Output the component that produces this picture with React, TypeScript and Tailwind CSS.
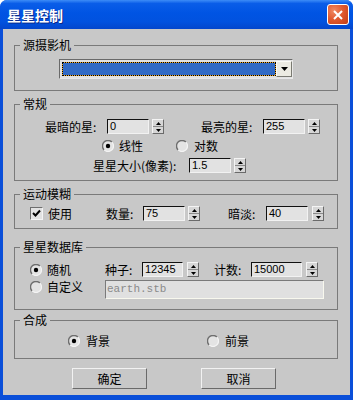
import clsx from 'clsx'
import type { ReactNode } from 'react'

function GroupBox({
	title,
	className,
	children,
}: {
	title: string
	className?: string
	children: ReactNode
}) {
	return (
		<fieldset
			className={clsx(
				'ml-[11px] w-[324px] border border-[#7a7a7a]',
				className,
			)}
		>
			<legend className="ml-[5px] px-[3px] text-[12px] leading-[14px]">
				{title}
			</legend>
			{children}
		</fieldset>
	)
}

function NumField({ value, className }: { value: string; className: string }) {
	return (
		<div
			className={clsx(
				'h-[15px] border-t border-l border-t-[#111] border-l-[#111] border-b border-r border-b-[#f2f2f2] border-r-[#f2f2f2] bg-[#e2e2e2] pl-[2px] font-["Liberation_Sans",sans-serif] text-[11px] leading-[13px] text-black',
				className,
			)}
		>
			{value}
		</div>
	)
}

function Spinner({ className }: { className: string }) {
	return (
		<div
			className={clsx(
				'flex h-[15px] w-[12px] flex-col border border-t-[#f4f4f4] border-l-[#f4f4f4] border-b-[#6a6a6a] border-r-[#6a6a6a] bg-[#d6d6d6]',
				className,
			)}
		>
			<div className="flex flex-1 items-center justify-center border-b border-[#8a8a8a]">
				<svg width="5" height="3" viewBox="0 0 5 3">
					<path d="M2.5 0L5 3H0z" fill="#000" />
				</svg>
			</div>
			<div className="flex flex-1 items-center justify-center">
				<svg width="5" height="3" viewBox="0 0 5 3">
					<path d="M0 0H5L2.5 3z" fill="#000" />
				</svg>
			</div>
		</div>
	)
}

function Radio({ checked }: { checked?: boolean }) {
	return (
		<svg width="12" height="12" viewBox="0 0 12 12" className="shrink-0">
			<circle cx="6" cy="6" r="5.5" fill="#e4e4e4" />
			<path
				d="M2.1 9.9A5.5 5.5 0 0 1 9.9 2.1"
				stroke="#6e6e6e"
				strokeWidth="1.4"
				fill="none"
			/>
			<path
				d="M9.9 2.1A5.5 5.5 0 0 1 2.1 9.9"
				stroke="#f4f4f4"
				strokeWidth="1.2"
				fill="none"
			/>
			{checked && <circle cx="6" cy="6" r="2.2" fill="#000" />}
		</svg>
	)
}

function Check() {
	return (
		<div className="flex h-[13px] w-[13px] shrink-0 items-center justify-center border border-t-[#6e6e6e] border-l-[#6e6e6e] border-b-[#f4f4f4] border-r-[#f4f4f4] bg-[#e2e2e2]">
			<svg width="9" height="9" viewBox="0 0 9 9">
				<path d="M1 4L3.5 6.5L8 1.5" stroke="#000" strokeWidth="2" fill="none" />
			</svg>
		</div>
	)
}

function Button({ label }: { label: string }) {
	return (
		<button
			type="button"
			className="h-[21px] w-[75px] border border-t-[#f2f2f2] border-l-[#f2f2f2] border-b-[#6a6a6a] border-r-[#6a6a6a] bg-[#c8c8c8] text-[12px] leading-[14px] text-black"
		>
			{label}
		</button>
	)
}

export default function App() {
	return (
		<div className="flex h-[400px] w-[353px] flex-col rounded-t-[7px] bg-[#0a4fd9] font-['Noto_Sans_CJK_SC',sans-serif] text-black">
			{/* title bar */}
			<div className="flex h-[29px] items-center justify-between rounded-t-[7px] bg-[linear-gradient(to_bottom,#3d8cf7_0%,#0a5de8_12%,#0054e3_45%,#0152df_75%,#0346cc_100%)] pl-[7px] pr-[4px]">
				<span className="text-[14px] font-bold leading-[16px] text-white [text-shadow:1px_1px_0_#0a2a8a]">
					星星控制
				</span>
				<div className="flex h-[21px] w-[22px] items-center justify-center rounded-[3px] border border-white bg-[radial-gradient(circle_at_30%_30%,#f08a64_0%,#e15a30_45%,#c23c15_100%)]">
					<svg width="10" height="10" viewBox="0 0 10 10">
						<path d="M1 1L9 9M9 1L1 9" stroke="#fff" strokeWidth="2" />
					</svg>
				</div>
			</div>

			<div className="mx-[3px] mb-[5px] flex flex-1 flex-col bg-[#c8c8c8]">
				<GroupBox title="源摄影机" className="mt-[9px]">
					<div className="mt-[7px] mb-[11px] ml-[44px] flex h-[20px] w-[234px] border border-t-[#6a6a6a] border-l-[#6a6a6a] border-b-[#e8e8e8] border-r-[#e8e8e8] bg-[#e2e2e2] py-[1px] pl-[2px]">
						<div className="my-[1px] flex-1 border border-dotted border-black bg-[#f0a828]">
							<div className="h-full w-full bg-[#316ac5]" />
						</div>
						<div className="flex w-[16px] items-center justify-center border border-t-[#fbfbf6] border-l-[#fbfbf6] border-b-[#7a7a72] border-r-[#7a7a72] bg-[#ecebe2]">
							<svg width="7" height="4" viewBox="0 0 7 4">
								<path d="M0 0H7L3.5 4z" fill="#000" />
							</svg>
						</div>
					</div>
				</GroupBox>

				<GroupBox title="常规" className="mt-[6px] pb-[7px]">
					<div className="mt-[8px] flex h-[15px] items-center pl-[30px] text-[12px]">
						<span className="w-[62px]">最暗的星:</span>
						<NumField value="0" className="w-[42px]" />
						<Spinner className="ml-[3px]" />
						<span className="ml-[37px] w-[62px]">最亮的星:</span>
						<NumField value="255" className="w-[42px]" />
						<Spinner className="ml-[3px]" />
					</div>
					<div className="mt-[4px] flex h-[16px] items-center pl-[87px] text-[12px]">
						<Radio checked />
						<span className="ml-[5px] w-[24px]">线性</span>
						<span className="ml-[33px] flex items-center">
							<Radio />
						</span>
						<span className="ml-[6px]">对数</span>
					</div>
					<div className="mt-[4px] flex h-[15px] items-center pl-[78px] text-[12px]">
						<span className="w-[96px]">星星大小(像素):</span>
						<NumField value="1.5" className="w-[42px]" />
						<Spinner className="ml-[3px]" />
					</div>
				</GroupBox>

				<GroupBox title="运动模糊" className="mt-[6px] pb-[7px]">
					<div className="mt-[5px] flex h-[15px] items-center pl-[15px] text-[12px]">
						<Check />
						<span className="ml-[5px] w-[24px]">使用</span>
						<span className="ml-[34px] w-[37px]">数量:</span>
						<NumField value="75" className="w-[42px]" />
						<Spinner className="ml-[3px]" />
						<span className="ml-[28px] w-[38px]">暗淡:</span>
						<NumField value="40" className="w-[42px]" />
						<Spinner className="ml-[4px]" />
					</div>
				</GroupBox>

				<GroupBox title="星星数据库" className="mt-[11px] pb-[10px]">
					<div className="mt-[8px] flex h-[15px] items-center pl-[15px] text-[12px]">
						<Radio checked />
						<span className="ml-[5px] w-[24px]">随机</span>
						<span className="ml-[34px] w-[37px]">种子:</span>
						<NumField value="12345" className="w-[41px]" />
						<Spinner className="ml-[4px]" />
						<span className="ml-[15px] w-[37px]">计数:</span>
						<NumField value="15000" className="w-[51px]" />
						<Spinner className="ml-[4px]" />
					</div>
					<div className="mt-[3px] flex h-[19px] items-start pl-[15px] text-[12px]">
						<div className="-mt-[1px] flex h-[16px] items-center">
							<Radio />
							<span className="ml-[5px] w-[36px]">自定义</span>
						</div>
						<div className="ml-[22px] h-[19px] w-[219px] border border-t-[#7a7a7a] border-l-[#7a7a7a] border-b-[#f8f8ee] border-r-[#f8f8ee] bg-[#e0e0e0] pl-[1px] font-['Liberation_Mono',monospace] text-[11px] leading-[17px] text-[#8a8a8a]">
							earth.stb
						</div>
					</div>
				</GroupBox>

				<GroupBox title="合成" className="mt-[3px] pb-[9px]">
					<div className="mt-[6px] flex h-[16px] items-center pl-[53px] text-[12px]">
						<Radio checked />
						<span className="ml-[6px] w-[24px]">背景</span>
						<span className="ml-[97px] flex items-center">
							<Radio />
						</span>
						<span className="ml-[6px]">前景</span>
					</div>
				</GroupBox>

				<div className="mt-[9px] flex gap-[54px] pl-[69px]">
					<Button label="确定" />
					<Button label="取消" />
				</div>
			</div>
		</div>
	)
}
